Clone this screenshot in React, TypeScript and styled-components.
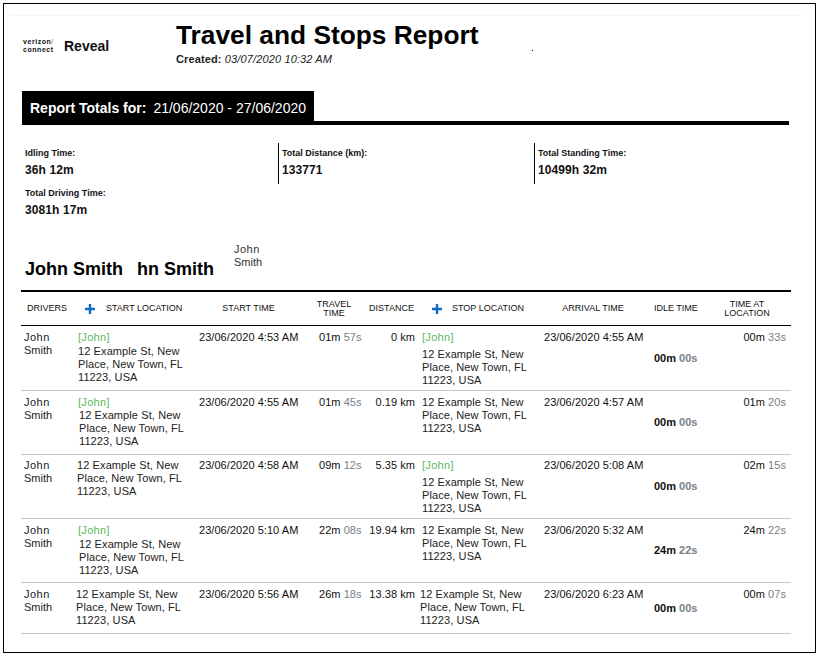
import React from 'react';
import styled, { createGlobalStyle } from 'styled-components';

type Trip = {
  startTag: boolean,
  startIndent: number,
  startGap: number,
  startTime: string,
  travel: [string, string],
  distance: string,
  stopTag: boolean,
  stopIndent: number,
  arrival: string,
  idle: [string, string],
  atLocation: [string, string],
  height: number,
  top: number,
}

const trips: Trip[] = [
  {
    startTag: true, startIndent: 0, startGap: 1, startTime: '23/06/2020 4:53 AM', travel: ['01m', '57s'], distance: '0 km',
    stopTag: true, stopIndent: 0, arrival: '23/06/2020 4:55 AM', idle: ['00m', '00s'], atLocation: ['00m', '33s'], height: 65, top: 5,
  },
  {
    startTag: true, startIndent: 1, startGap: 0, startTime: '23/06/2020 4:55 AM', travel: ['01m', '45s'], distance: '0.19 km',
    stopTag: false, stopIndent: 0, arrival: '23/06/2020 4:57 AM', idle: ['00m', '00s'], atLocation: ['01m', '20s'], height: 64, top: 5,
  },
  {
    startTag: false, startIndent: -1, startGap: 0, startTime: '23/06/2020 4:58 AM', travel: ['09m', '12s'], distance: '5.35 km',
    stopTag: true, stopIndent: 0, arrival: '23/06/2020 5:08 AM', idle: ['00m', '00s'], atLocation: ['02m', '15s'], height: 64, top: 4,
  },
  {
    startTag: true, startIndent: 1, startGap: 1, startTime: '23/06/2020 5:10 AM', travel: ['22m', '08s'], distance: '19.94 km',
    stopTag: false, stopIndent: 0, arrival: '23/06/2020 5:32 AM', idle: ['24m', '22s'], atLocation: ['24m', '22s'], height: 64, top: 5,
  },
  {
    startTag: false, startIndent: -2, startGap: 0, startTime: '23/06/2020 5:56 AM', travel: ['26m', '18s'], distance: '13.38 km',
    stopTag: false, stopIndent: -2, arrival: '23/06/2020 6:23 AM', idle: ['00m', '00s'], atLocation: ['00m', '07s'], height: 51, top: 5,
  },
];

const totals = [
  { label: 'Idling Time:', value: '36h 12m' },
  { label: 'Total Distance (km):', value: '133771' },
  { label: 'Total Standing Time:', value: '10499h 32m' },
  { label: 'Total Driving Time:', value: '3081h 17m' },
];

const PlusIcon = () => (
  <PlusSvg viewBox="0 0 10 10" aria-hidden="true">
    <path d="M3.8 0h2.4v3.8H10v2.4H6.2V10H3.8V6.2H0V3.8h3.8z" fill="#0f6cbd" />
  </PlusSvg>
);

const Duration = ({ parts }: { parts: [string, string] }) => (
  <>
    {parts[0]} <Seconds>{parts[1]}</Seconds>
  </>
);

const Location = ({ tag, indent, gap }: { tag: boolean, indent: number, gap: number }) => (
  <>
    {tag && <Tag $gap={gap}>[John]</Tag>}
    <Address $indent={indent}>12 Example St, New Place, New Town, FL 11223, USA</Address>
  </>
);

export default function App() {
  return (
    <>
      <GlobalStyle />
      <Frame>
        <TopRule />
        <Header>
          <Logo>
            <LogoMark>
              <span>verizon<LogoTick>/</LogoTick></span>
              <span>connect</span>
            </LogoMark>
            <LogoName>Reveal</LogoName>
          </Logo>
          <Heading>
            <Title>Travel and Stops Report</Title>
            <Created><b>Created:</b> <i>03/07/2020 10:32 AM</i></Created>
          </Heading>
          <Speck />
        </Header>

        <TotalsBar>
          <TotalsTab>
            <b>Report Totals for:</b>
            <span>21/06/2020 - 27/06/2020</span>
          </TotalsTab>
        </TotalsBar>

        <TotalsGrid>
          {totals.map((total, index) => (
            <TotalCell key={total.label} $divided={index === 1 || index === 2}>
              <TotalLabel>{total.label}</TotalLabel>
              <TotalValue>{total.value}</TotalValue>
            </TotalCell>
          ))}
        </TotalsGrid>

        <DriverRow>
          <DriverName>John Smith</DriverName>
          <DriverName>hn Smith</DriverName>
          <DriverSmall><FirstName>John</FirstName><br />Smith</DriverSmall>
        </DriverRow>

        <Table>
          <colgroup>
            <col width={54} />
            <col width={121} />
            <col width={120} />
            <col width={50} />
            <col width={53} />
            <col width={122} />
            <col width={110} />
            <col width={58} />
            <col width={82} />
          </colgroup>
          <thead>
            <tr>
              <HeadCell $align="left" $left={6}>Drivers</HeadCell>
              <HeadCell><HeadInner $left={10} $gap={11}><PlusIcon />Start Location</HeadInner></HeadCell>
              <HeadCell $right={15}>Start Time</HeadCell>
              <HeadCell $right={14}>Travel<br />Time</HeadCell>
              <HeadCell $right={2}>Distance</HeadCell>
              <HeadCell><HeadInner $left={13} $gap={10}><PlusIcon />Stop Location</HeadInner></HeadCell>
              <HeadCell $right={6}>Arrival Time</HeadCell>
              <HeadCell $align="left" $left={3}>Idle Time</HeadCell>
              <HeadCell $right={6}>Time at<br />Location</HeadCell>
            </tr>
          </thead>
          <tbody>
            {trips.map((trip) => (
              <Row key={trip.startTime} $height={trip.height}>
                <Cell $top={trip.top}><FirstName>John</FirstName><br />Smith</Cell>
                <Cell $top={trip.top}><Location tag={trip.startTag} indent={trip.startIndent} gap={trip.startGap} /></Cell>
                <TimeCell $top={trip.top}>{trip.startTime}</TimeCell>
                <TimeCell $top={trip.top}><Duration parts={trip.travel} /></TimeCell>
                <DistanceCell $top={trip.top}>{trip.distance}</DistanceCell>
                <Cell $top={trip.top}><Location tag={trip.stopTag} indent={trip.stopIndent} gap={4} /></Cell>
                <TimeCell $top={trip.top}>{trip.arrival}</TimeCell>
                <IdleCell><Duration parts={trip.idle} /></IdleCell>
                <AtLocationCell $top={trip.top}><Duration parts={trip.atLocation} /></AtLocationCell>
              </Row>
            ))}
          </tbody>
        </Table>
      </Frame>
    </>
  );
}

const GlobalStyle = createGlobalStyle`
  html, body {
    margin: 0;
    background: #fff;
  }

  body {
    font-family: "Liberation Sans", Arial, sans-serif;
    color: #000;
  }
`;

const Frame = styled.div`
  box-sizing: border-box;
  position: relative;
  width: 813px;
  height: 650px;
  margin: 3px 0 0 3px;
  padding: 11px 0 0 18px;
  border: 1px solid #000;
`;

const TopRule = styled.div`
  width: 792px;
  height: 1px;
  margin-left: -12px;
  background: #f6f6f6;
`;

const Header = styled.header`
  position: relative;
  display: flex;
  height: 75px;
`;

const Logo = styled.div`
  display: flex;
  align-items: center;
  gap: 9px;
  width: 154px;
  height: 60px;
  padding-left: 1px;
  box-sizing: border-box;
`;

const LogoMark = styled.div`
  display: flex;
  flex-direction: column;
  width: 32px;
  font-size: 7px;
  font-weight: 700;
  line-height: 8px;
  letter-spacing: 0.55px;
  color: #111;
`;

const LogoTick = styled.span`
  color: #d52b1e;
  font-weight: 400;
`;

const LogoName = styled.div`
  font-size: 14px;
  font-weight: 700;
  color: #111;
`;

const Heading = styled.div`
  display: flex;
  flex-direction: column;
  padding-top: 3px;
`;

const Title = styled.h1`
  margin: 0;
  font-size: 26.3px;
  line-height: 33px;
  font-weight: 700;
`;

const Created = styled.div`
  margin-top: 1px;
  font-size: 11px;
  line-height: 13px;
  letter-spacing: 0.13px;
  color: #222;
`;

const Speck = styled.span`
  position: absolute;
  left: 510px;
  top: 34px;
  width: 1px;
  height: 1px;
  background: #000;
`;

const TotalsBar = styled.div`
  display: flex;
  width: 767px;
  height: 34px;
  border-bottom: 4px solid #000;
  box-sizing: border-box;
`;

const TotalsTab = styled.div`
  display: flex;
  align-items: center;
  gap: 7px;
  width: 292px;
  height: 34px;
  padding: 0 0 1px 8px;
  box-sizing: border-box;
  background: #000;
  color: #fff;
  font-size: 14px;
`;

const TotalsGrid = styled.div`
  display: grid;
  grid-template-columns: 256px 256px 256px;
  grid-auto-rows: 40px;
  margin-top: 18px;
`;

const TotalCell = styled.div<{ $divided: boolean }>`
  box-sizing: border-box;
  height: 41px;
  padding: 4px 0 0 3px;
  margin-left: ${(props) => (props.$divided ? 0 : -1)}px;
  border-left: 1px solid ${(props) => (props.$divided ? '#000' : 'transparent')};
`;

const TotalLabel = styled.div`
  font-size: 9px;
  line-height: 12px;
  font-weight: 700;
  color: #111;
`;

const TotalValue = styled.div`
  margin-top: 4px;
  font-size: 12px;
  line-height: 15px;
  letter-spacing: 0.1px;
  font-weight: 700;
  color: #111;
`;

const DriverRow = styled.div`
  display: flex;
  align-items: flex-end;
  height: 51px;
  margin-top: 5px;
  padding-left: 3px;
`;

const DriverName = styled.div`
  margin-right: 14px;
  font-size: 18px;
  line-height: 20px;
  font-weight: 700;
`;

const DriverSmall = styled.div`
  align-self: flex-start;
  margin: 15px 0 0 6px;
  font-size: 11px;
  line-height: 13px;
  color: #333;
`;

const FirstName = styled.span`
  letter-spacing: 0.5px;
`;

const Table = styled.table`
  width: 770px;
  margin: 11px 0 0 -1px;
  border-collapse: collapse;
  table-layout: fixed;
  font-size: 11px;
  line-height: 13px;
  color: #222;
`;

const HeadCell = styled.th<{ $align?: string, $left?: number, $right?: number }>`
  height: 33px;
  padding: 0 ${(props) => props.$right || 0}px 0 ${(props) => props.$left || 0}px;
  border-top: 2px solid #000;
  border-bottom: 1px solid #000;
  font-size: 9px;
  line-height: 9px;
  font-weight: 400;
  text-align: ${(props) => props.$align || 'center'};
  text-transform: uppercase;
  color: #111;
`;

const HeadInner = styled.div<{ $left: number, $gap: number }>`
  display: flex;
  align-items: center;
  gap: ${(props) => props.$gap}px;
  padding-left: ${(props) => props.$left}px;
`;

const PlusSvg = styled.svg`
  flex: none;
  width: 10px;
  height: 10px;
`;

const Row = styled.tr<{ $height: number }>`
  height: ${(props) => props.$height}px;
  border-bottom: 1px solid #c8c8c8;
`;

const Cell = styled.td<{ $top: number }>`
  padding: ${(props) => props.$top}px 0 0 3px;
  vertical-align: top;
`;

const Tag = styled.div<{ $gap: number }>`
  margin-bottom: ${(props) => props.$gap}px;
  letter-spacing: 0.3px;
  color: #5cb85c;
`;

const Address = styled.div<{ $indent: number }>`
  width: 115px;
  margin-left: ${(props) => props.$indent}px;
  letter-spacing: 0.1px;
`;

const TimeCell = styled(Cell)`
  white-space: nowrap;
  letter-spacing: 0.05px;
  color: #111;
`;

const DistanceCell = styled(TimeCell)`
  padding-right: 4px;
  text-align: right;
`;

const IdleCell = styled.td`
  padding: 0 0 0 3px;
  font-weight: 700;
  white-space: nowrap;
  color: #111;
  vertical-align: middle;
`;

const AtLocationCell = styled(TimeCell)`
  padding-right: 5px;
  text-align: right;
`;

const Seconds = styled.span`
  color: #76818a;
`;
